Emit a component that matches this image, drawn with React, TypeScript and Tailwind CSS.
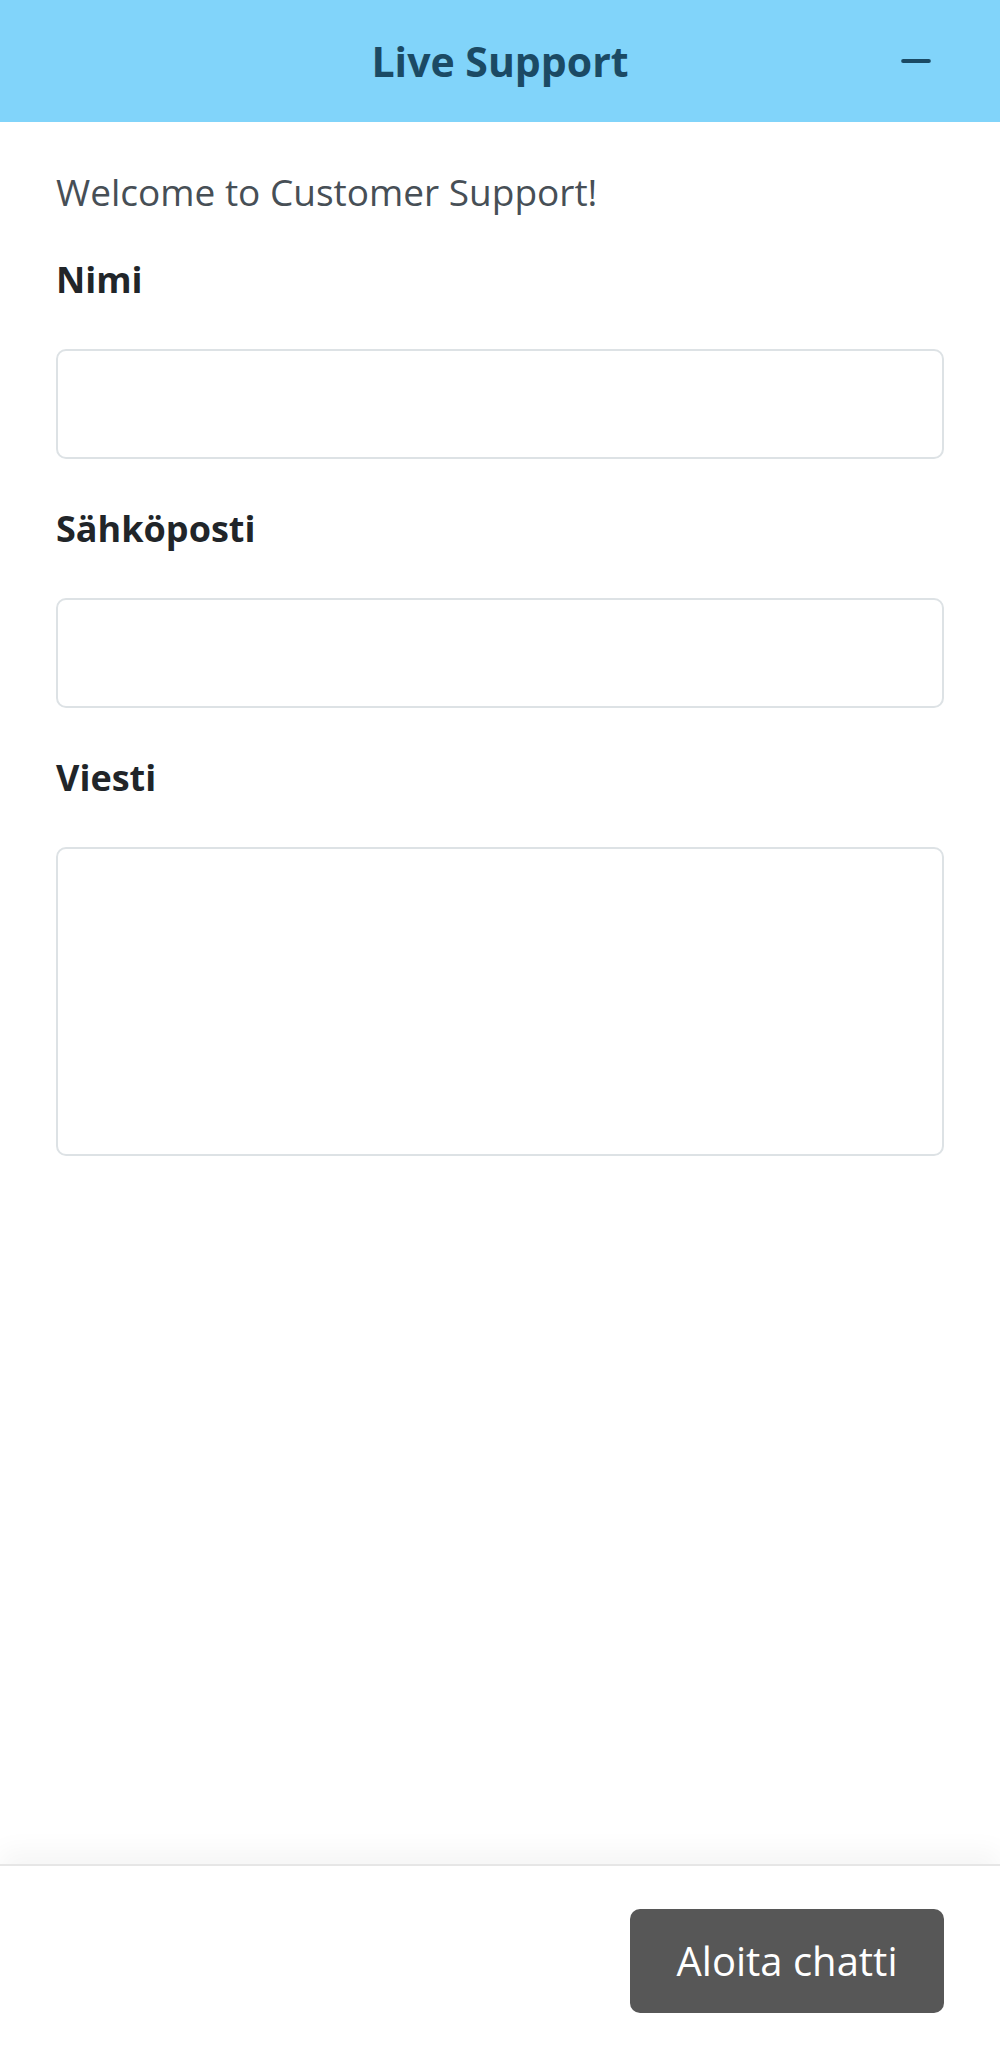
import { Minus } from "lucide-react"

function Field({ label, tall }: { label: string; tall?: boolean }) {
  return (
    <div className="flex flex-col">
      <label className="h-[44px] text-[36px] font-bold leading-[44px] text-[#212529]">{label}</label>
      {tall ? (
        <textarea className="mt-[47px] h-[309px] w-full resize-none rounded-[10px] border-2 border-[#dde2e5] bg-white outline-none" />
      ) : (
        <input type="text" className="mt-[47px] h-[110px] w-full rounded-[10px] border-2 border-[#dde2e5] bg-white outline-none" />
      )}
    </div>
  )
}

export default function App() {
  return (
    <div className="flex h-screen flex-col bg-white font-['Open_Sans',sans-serif]">
      <header className="grid h-[122px] shrink-0 grid-cols-[1fr_auto_1fr] items-center bg-[#81d4fa]">
        <div />
        <h1 className="text-[41px] font-bold leading-none text-[#1b4a64]">Live Support</h1>
        <div className="flex justify-end pr-[62px]">
          <button className="flex h-[44px] w-[44px] items-center justify-center text-[#1b4a64]">
            <Minus className="h-[44px] w-[44px]" strokeWidth={2.2} />
          </button>
        </div>
      </header>

      <main className="flex flex-1 flex-col px-[56px] pt-[48px]">
        <p className="text-[37px] leading-[44px] text-[#474f56]">Welcome to Customer Support!</p>
        <div className="mt-[44px] flex flex-col gap-[48px]">
          <Field label="Nimi" />
          <Field label="Sähköposti" />
          <Field label="Viesti" tall />
        </div>
      </main>

      <footer className="flex h-[192px] shrink-0 items-center justify-end border-t-2 border-[#e6e6e6] px-[56px] shadow-[0_-14px_24px_rgba(0,0,0,0.04)]">
        <button className="h-[104px] w-[314px] rounded-[10px] bg-[#575757] text-[40px] text-white">Aloita chatti</button>
      </footer>
    </div>
  )
}
